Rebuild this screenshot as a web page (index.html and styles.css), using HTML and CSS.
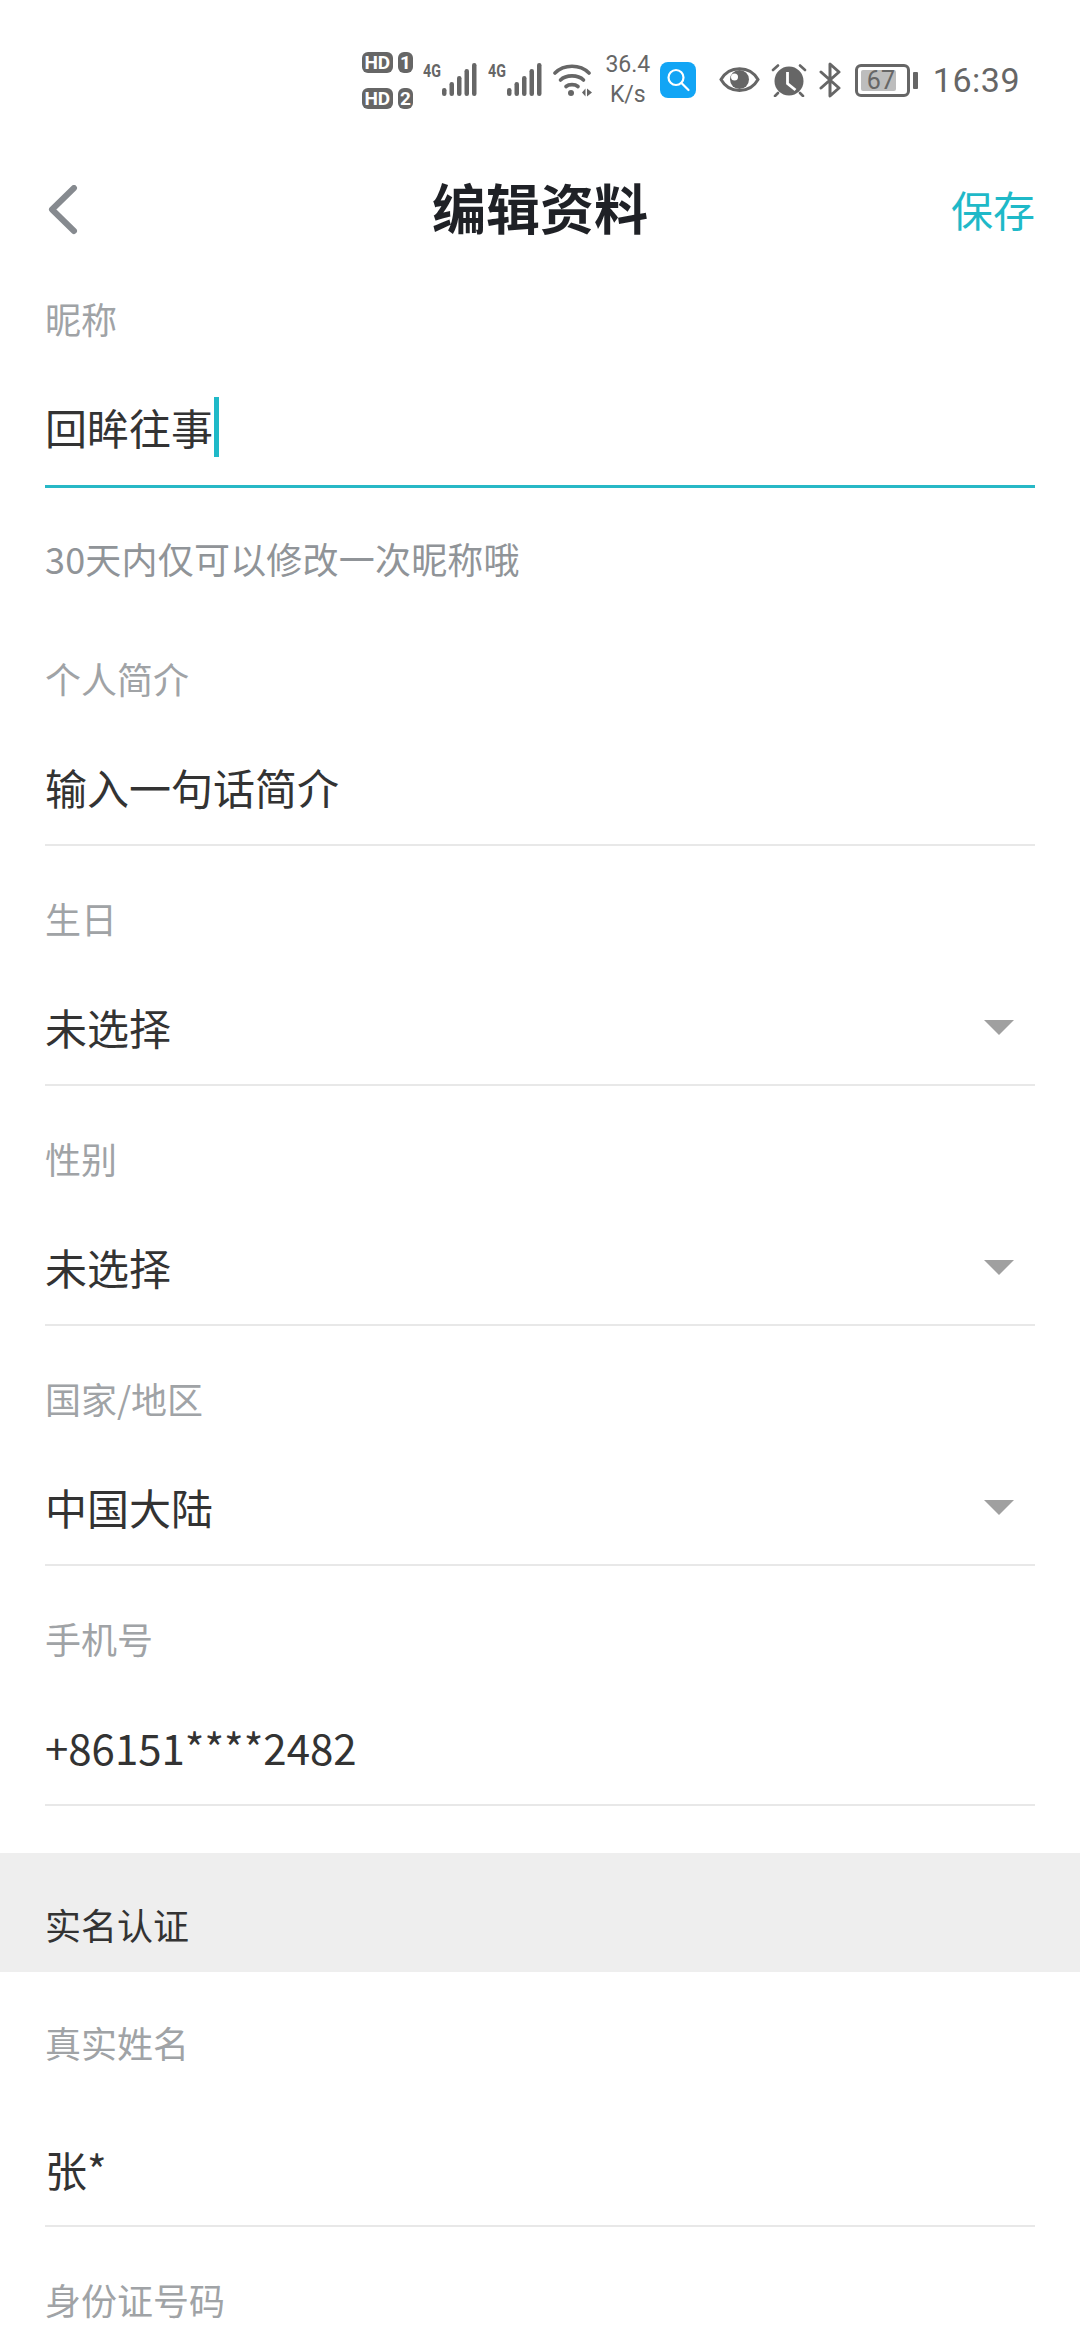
FILE: index.html
```html
<!DOCTYPE html>
<html>
<head>
    <title>编辑资料</title>
    <link rel="stylesheet" href="styles.css">
</head>
<body>
    <div class="status-bar">
        <div class="sims">
            <div class="sim"><span class="hd">HD</span><span class="sim-no">1</span></div>
            <div class="sim"><span class="hd">HD</span><span class="sim-no">2</span></div>
        </div>
        <div class="net">
            <span class="net-type">4G</span>
            <svg class="signal" width="35" height="33" viewBox="0 0 35 33"><g fill="#666"><rect x="0" y="25" width="4.5" height="8" rx="2.200"/><rect x="7.500" y="19" width="4.500" height="14" rx="2.200"/><rect x="15" y="13" width="4.500" height="20" rx="2.200"/><rect x="22.500" y="6" width="4.500" height="27" rx="2.200"/><rect x="30" y="0" width="4.500" height="33" rx="2.200"/></g></svg>
        </div>
        <div class="net">
            <span class="net-type">4G</span>
            <svg class="signal" width="35" height="33" viewBox="0 0 35 33"><g fill="#666"><rect x="0" y="25" width="4.5" height="8" rx="2.200"/><rect x="7.500" y="19" width="4.500" height="14" rx="2.200"/><rect x="15" y="13" width="4.500" height="20" rx="2.200"/><rect x="22.500" y="6" width="4.500" height="27" rx="2.200"/><rect x="30" y="0" width="4.500" height="33" rx="2.200"/></g></svg>
        </div>
        <svg class="wifi" width="40" height="34" viewBox="0 0 40 34">
            <g fill="none" stroke="#666" stroke-width="3.600" stroke-linecap="round"><path d="M2 10C11 1 27 1 36 10"/><path d="M7.500 17C13 11.500 25 11.500 30.500 17"/><path d="M13 23.500C16 21 22 21 25 23.500"/></g>
            <circle cx="18" cy="30" r="3" fill="#666"/>
            <path d="M29 29.500l3.500-4v8zM34 25.500l5 4-5 4z" fill="#666"/>
        </svg>
        <div class="speed">36.4<br>K/s</div>
        <svg class="app" width="36" height="36" viewBox="0 0 36 36">
            <rect width="36" height="36" rx="8" fill="#12a5f5"/>
            <circle cx="16" cy="15.500" r="7.500" fill="none" stroke="#fff" stroke-width="2.200"/>
            <path d="M21.500 21l7 7" stroke="#fff" stroke-width="2.200" stroke-linecap="round"/>
        </svg>
        <svg class="eye" width="41" height="27" viewBox="0 0 41 27">
            <path d="M2 13.500C10 -1 31 -1 39 13.500C31 28 10 28 2 13.500Z" fill="none" stroke="#666" stroke-width="3"/>
            <circle cx="20.500" cy="13.500" r="9.500" fill="#666"/>
            <circle cx="15.500" cy="11" r="3.500" fill="#fff"/>
        </svg>
        <svg class="alarm" width="36" height="34" viewBox="0 0 36 34">
            <circle cx="18" cy="18" r="14.500" fill="#666"/>
            <path d="M16.500 9v11.500l8 6.500" fill="none" stroke="#fff" stroke-width="2.800"/>
            <path d="M2 7l5-4.500M34 7l-5-4.500M7 30l-3 3M29 30l3 3" stroke="#666" stroke-width="2.600" stroke-linecap="round"/>
        </svg>
        <svg class="bt" width="23" height="36" viewBox="0 0 23 36">
            <path d="M2 10L20 26L11 34V2L20 10L2 26" fill="none" stroke="#666" stroke-width="3" stroke-linecap="round" stroke-linejoin="round"/>
        </svg>
        <div class="battery">
            <div class="battery-body"><div class="battery-fill"></div><span class="battery-num">67</span></div>
            <div class="battery-nub"></div>
        </div>
        <div class="clock">16:39</div>
    </div>

    <div class="nav">
        <svg class="back" width="30" height="50" viewBox="0 0 30 50">
            <path d="M26 3L4 24.500L26 46" fill="none" stroke="#868a8f" stroke-width="6" stroke-linecap="round" stroke-linejoin="round"/>
        </svg>
        <h1>编辑资料</h1>
        <span class="save">保存</span>
    </div>

    <div class="field field-active">
        <div class="label">昵称</div>
        <div class="value">回眸往事<span class="caret"></span></div>
    </div>
    <div class="hint">30天内仅可以修改一次昵称哦</div>

    <div class="field">
        <div class="label">个人简介</div>
        <div class="value">输入一句话简介</div>
    </div>
    <div class="field">
        <div class="label">生日</div>
        <div class="value">未选择<span class="arrow"></span></div>
    </div>
    <div class="field">
        <div class="label">性别</div>
        <div class="value">未选择<span class="arrow"></span></div>
    </div>
    <div class="field">
        <div class="label">国家/地区</div>
        <div class="value">中国大陆<span class="arrow"></span></div>
    </div>
    <div class="field">
        <div class="label">手机号</div>
        <div class="value">+86151****2482</div>
    </div>

    <div class="section">实名认证</div>

    <div class="field field-tall">
        <div class="label">真实姓名</div>
        <div class="value">张*</div>
    </div>
    <div class="field field-cut">
        <div class="label">身份证号码</div>
    </div>
</body>
</html>
```

FILE: styles.css
```css
html, body {
    margin: 0;
    padding: 0;
}
body {
    width: 1080px;
    height: 2340px;
    overflow: hidden;
    background-color: #fff;
    font-family: "Noto Sans CJK SC", "Noto Sans", sans-serif;
}
.status-bar {
    display: flex;
    justify-content: flex-end;
    align-items: center;
    height: 160px;
    padding: 0 60px 0 0;
    box-sizing: border-box;
    color: #666;
    font-family: Roboto, sans-serif;
}
.sims {
    display: flex;
    flex-direction: column;
    gap: 15px;
    margin-right: 10px;
}
.sim {
    display: flex;
    gap: 5px;
}
.hd, .sim-no {
    height: 21px;
    border-radius: 6px;
    background-color: #666;
    color: #fff;
    font-size: 19px;
    line-height: 21px;
    font-weight: 700;
    text-align: center;
}
.hd {
    width: 31px;
}
.sim-no {
    width: 15px;
}
.net {
    display: flex;
    align-items: flex-start;
    height: 33px;
    margin-right: 11px;
    margin-top: -1px;
}
.net-type {
    width: 19px;
    font-size: 19px;
    line-height: 16px;
    font-weight: 700;
    transform: scaleX(0.75);
    transform-origin: left;
}
.wifi {
    margin-top: -1px;
    margin-right: 11px;
}
.speed {
    width: 48px;
    margin-right: 8px;
    font-size: 23px;
    line-height: 30px;
    text-align: center;
}
.app {
    margin-right: 23px;
}
.eye {
    margin-right: 11px;
    margin-top: -2px;
}
.alarm {
    margin-right: 12px;
    margin-top: -1px;
}
.bt {
    margin-right: 13px;
}
.battery {
    display: flex;
    align-items: center;
    gap: 3px;
    margin-right: 15px;
}
.battery-body {
    position: relative;
    width: 55px;
    height: 33px;
    box-sizing: border-box;
    border: 3px solid #666;
    border-radius: 6px;
}
.battery-fill {
    width: 35px;
    height: 21px;
    margin: 3px;
    background-color: #bdbdbd;
    border-radius: 2px;
}
.battery-num {
    position: absolute;
    left: 9px;
    top: 0;
    font-size: 25px;
    line-height: 27px;
}
.battery-nub {
    width: 5px;
    height: 17px;
    background-color: #666;
    border-radius: 1px;
}
.clock {
    font-size: 34px;
    line-height: 40px;
    letter-spacing: 0.5px;
}

.nav {
    position: relative;
    display: flex;
    justify-content: center;
    align-items: center;
    height: 90px;
    margin-top: 5px;
}
.nav h1 {
    margin: -7px 0 0;
    font-size: 54px;
    line-height: 70px;
    font-weight: 700;
    color: #1f2126;
}
.back {
    position: absolute;
    left: 48px;
    top: 20px;
}
.save {
    position: absolute;
    right: 45px;
    top: 17px;
    font-size: 42px;
    line-height: 54px;
    color: #1fb9c8;
}

.field {
    height: 240px;
    padding-top: 47px;
    margin: 0 45px;
    box-sizing: border-box;
    border-bottom: 2px solid #e8e8e8;
}
.field-active {
    height: 233px;
    padding-top: 38px;
    border-bottom: 3px solid #28b8c6;
}
.field-tall {
    height: 255px;
    padding-top: 45px;
}
.field-cut {
    height: 100px;
    border-bottom: none;
}
.label {
    font-size: 36px;
    line-height: 50px;
    color: #a0a3a6;
}
.value {
    display: flex;
    align-items: center;
    margin-top: 56px;
    font-size: 42px;
    line-height: 56px;
    color: #333;
}
.field-active .value {
    margin-top: 54px;
}
.field-tall .value {
    margin-top: 74px;
}
.caret {
    width: 5px;
    height: 60px;
    margin-left: 1px;
    background-color: #1fb9c8;
}
.arrow {
    width: 0;
    height: 0;
    margin-left: auto;
    margin-right: 21px;
    border-left: 15px solid transparent;
    border-right: 15px solid transparent;
    border-top: 15px solid #a0a0a0;
}
.hint {
    height: 118px;
    margin: 0 45px;
    padding-top: 43px;
    box-sizing: border-box;
    font-size: 36px;
    line-height: 54px;
    letter-spacing: 0.2px;
    color: #909498;
}
.section {
    display: flex;
    align-items: center;
    height: 119px;
    margin-top: 47px;
    padding: 22px 0 0 45px;
    box-sizing: border-box;
    background-color: #eeeeee;
    font-size: 36px;
    line-height: 50px;
    color: #333;
}
```
